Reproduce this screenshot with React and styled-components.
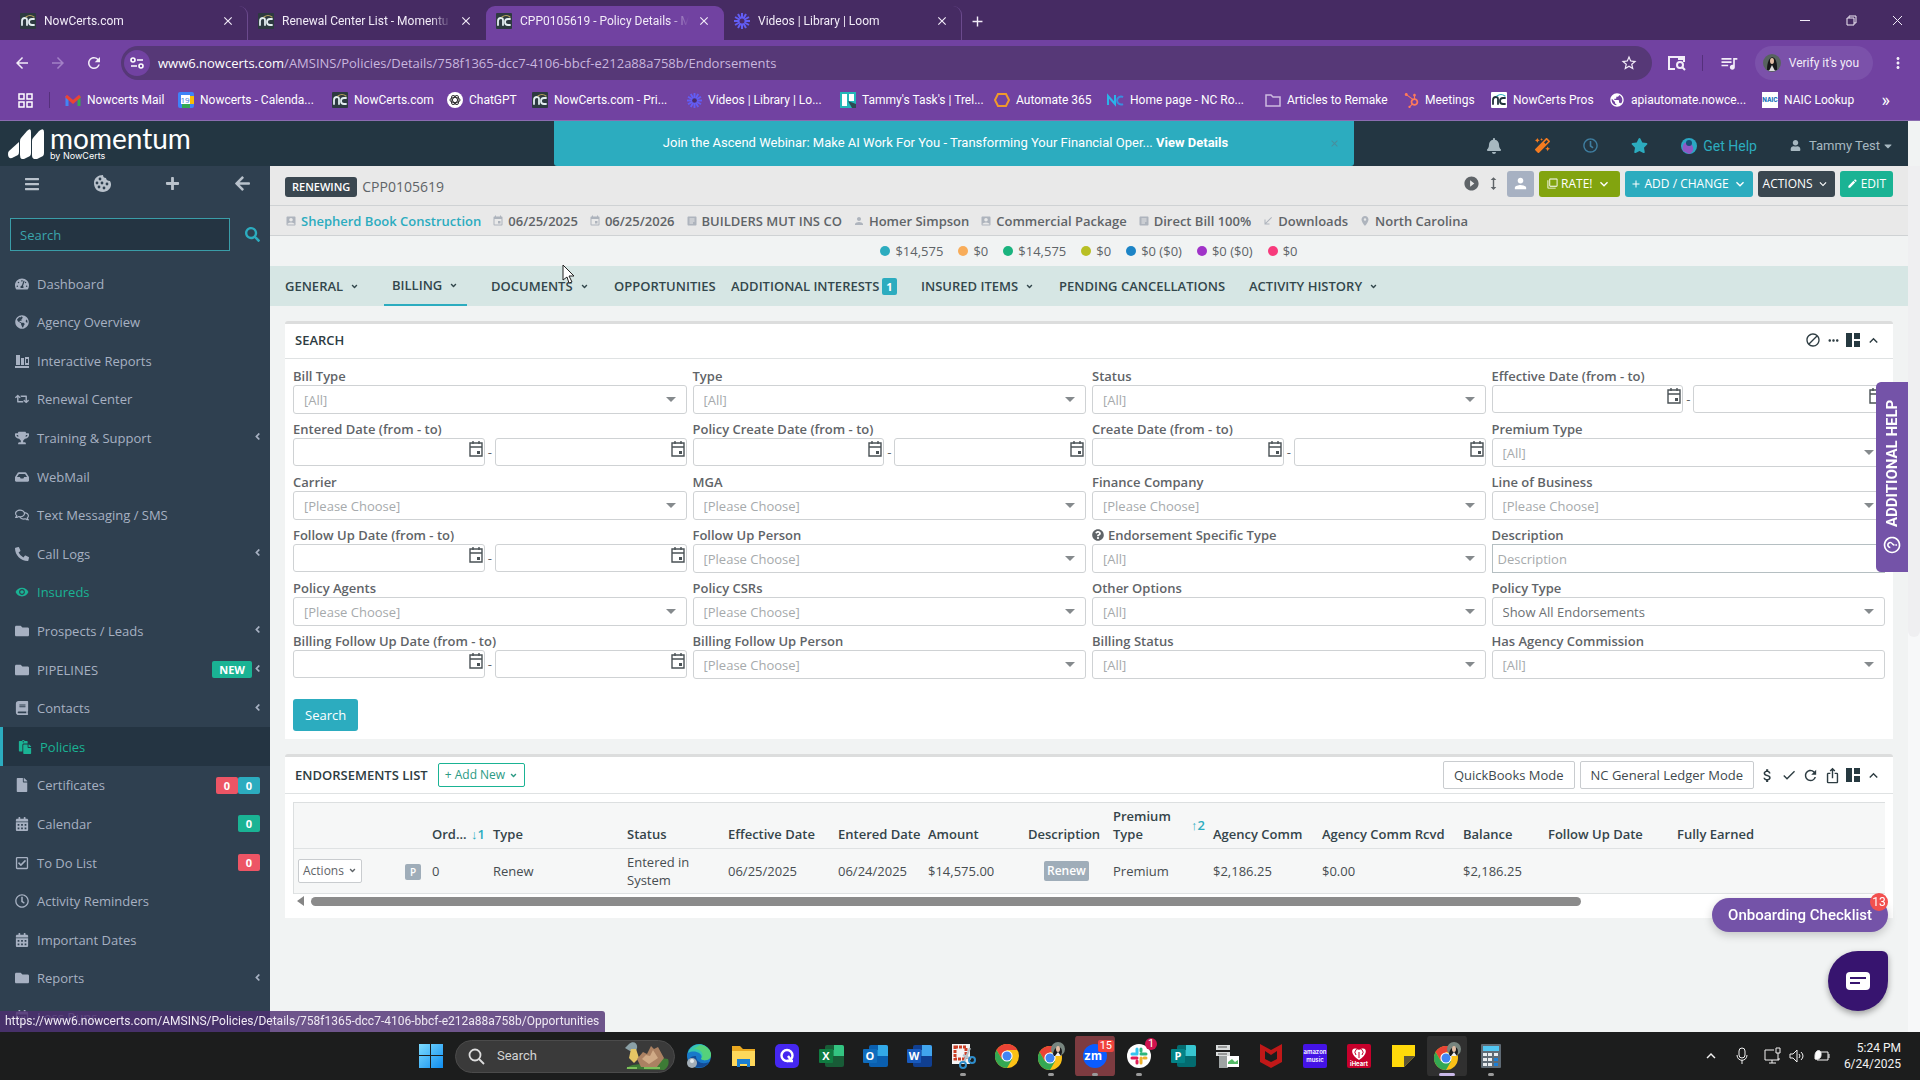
// Components==============
import React, { useId } from "react";
import styled, { createGlobalStyle, ThemeProvider } from "styled-components";
import {
  FaAngleDown,
  FaAngleLeft,
  FaArrowLeft,
  FaBars,
  FaBell,
  FaBook,
  FaCalendarAlt,
  FaCaretDown,
  FaFile,
  FaFolder,
  FaGlobeAmericas,
  FaHubspot,
  FaInbox,
  FaMagic,
  FaPaste,
  FaPhoneAlt,
  FaPlus,
  FaQuestionCircle,
  FaRegCheckSquare,
  FaRegClock,
  FaRegComments,
  FaRegCalendarAlt,
  FaRetweet,
  FaSearch,
  FaStar,
  FaTachometerAlt,
  FaTrophy,
  FaUser,
} from "react-icons/fa";
import {
  MdAccountBox,
  MdAdd,
  MdArrowBack,
  MdArrowForward,
  MdArticle,
  MdAttachMoney,
  MdBlock,
  MdCallReceived,
  MdCheck,
  MdClose,
  MdEdit,
  MdEvent,
  MdExpandLess,
  MdExpandMore,
  MdFilterNone,
  MdHeight,
  MdHelpOutline,
  MdIosShare,
  MdMoreHoriz,
  MdMoreVert,
  MdPerson,
  MdPlace,
  MdPlayCircleFilled,
  MdPublic,
  MdQueueMusic,
  MdRefresh,
  MdStarBorder,
  MdVisibility,
} from "react-icons/md";
// =========================

const theme = {
  purple: { strip: "#462b63", bar: "#7142a1", field: "#563877", help: "#7453a8" },
  navy: { header: "#233642", side: "#2f4050", active: "#243442" },
  teal: "#2cacbf",
  green: "#1ab394",
  red: "#ed5565",
  slate: "#3a4750",
  line: "#cfd2d4",
  text: "#5f6468",
  app: `"Open Sans", "Noto Sans", sans-serif`,
  chrome: `Roboto, "Open Sans", sans-serif`,
};

const GlobalStyle = createGlobalStyle`
  * { box-sizing: border-box; }
  body { margin: 0; overflow: hidden; }
  button, input, select { font: inherit; color: inherit; margin: 0; }
  button { padding: 0; border: 0; background: none; cursor: pointer; }
  a { color: inherit; text-decoration: none; }
  svg { display: block; flex: none; }
`;

const Screen = styled.div`
  display: flex;
  flex-direction: column;
  height: 100vh;
  font: 13px/18px ${({ theme }) => theme.app};
  color: ${({ theme }) => theme.text};
  background: #f1f3f3;
`;

// Browser==================
const TabStrip = styled.div`
  flex: none;
  display: flex;
  align-items: flex-end;
  height: 40px;
  padding-left: 10px;
  background: ${({ theme }) => theme.purple.strip};
  color: #f2ecf8;
  font: 12px/16px ${({ theme }) => theme.chrome};
`;

const Tab = styled.div`
  display: flex;
  align-items: center;
  gap: 8px;
  width: 238px;
  height: 34px;
  padding: 0 12px 4px 10px;
  border-radius: 9px 9px 0 0;
  background: ${({ $active, theme }) => $active && theme.purple.bar};
  border-right: 1px solid
    ${({ $line }) => ($line ? "#6b4a8d" : "transparent")};
`;

const TabTitle = styled.span`
  flex: 1;
  overflow: hidden;
  white-space: nowrap;
  mask-image: linear-gradient(to right, #000 88%, transparent);
`;

const NewTab = styled.button`
  height: 34px;
  padding: 0 7px 4px;
`;

const WindowButtons = styled.div`
  display: flex;
  align-items: center;
  height: 40px;
  margin-left: auto;

  button {
    display: grid;
    place-items: center;
    width: 46px;
    height: 40px;
  }
`;

const Toolbar = styled.div`
  flex: none;
  display: flex;
  align-items: center;
  height: 46px;
  padding: 0 13px;
  gap: 16px;
  background: ${({ theme }) => theme.purple.bar};
  color: #f2ecf8;
`;

const NavButtons = styled.div`
  display: flex;
  gap: 18px;
  padding-right: 2px;
`;

const Address = styled.label`
  flex: 1;
  display: flex;
  align-items: center;
  gap: 8px;
  height: 34px;
  padding: 0 14px 0 3px;
  border-radius: 17px;
  background: ${({ theme }) => theme.purple.field};
`;

const SiteInfo = styled.span`
  display: grid;
  place-items: center;
  width: 26px;
  height: 26px;
  border-radius: 50%;
  background: ${({ theme }) => theme.purple.bar};
`;

const Url = styled.span`
  flex: 1;
  color: #c9b6df;

  b {
    font-weight: 400;
    color: #fff;
  }
`;

const Profile = styled.button`
  display: flex;
  align-items: center;
  gap: 8px;
  height: 34px;
  padding: 0 14px 0 8px;
  border-radius: 17px;
  background: #7b51aa;
  font: 12px/16px ${({ theme }) => theme.chrome};
`;

const Divider = styled.span`
  width: 1px;
  height: 16px;
  background: #55307c;
`;

const Bookmarks = styled.nav`
  flex: none;
  display: flex;
  align-items: center;
  height: 35px;
  padding: 0 30px 6px 18px;
  background: ${({ theme }) => theme.purple.bar};
  border-bottom: 1px solid #8b6cb0;
  color: #fff;
  font: 12px/16px ${({ theme }) => theme.chrome};
  white-space: nowrap;
`;

const Bookmark = styled.a`
  flex: 0 1 ${({ $w }) => $w}px;
  display: flex;
  align-items: center;
  gap: 6px;
`;

const MoreBookmarks = styled.button`
  margin-left: auto;
  font-size: 18px;
`;

const AppsButton = styled.button`
  display: flex;
  width: 31px;
`;

const NaicTile = styled.span`
  flex: none;
  width: 16px;
  height: 16px;
  background: #fff;
  color: #1b75bb;
  font: 800 6px/16px Inter, sans-serif;
  text-align: center;
`;

// App shell================
const AppHeader = styled.header`
  flex: none;
  display: grid;
  grid-template-columns: 554px minmax(0, 800px) 1fr;
  height: 45px;
  margin-right: 12px;
  background: ${({ theme }) => theme.navy.header};
`;

const Logo = styled.a`
  display: flex;
  align-items: center;
  gap: 6px;
  padding-left: 8px;
  color: #fff;
`;

const LogoText = styled.span`
  display: flex;
  flex-direction: column;
  font: 28px/24px "Lato", sans-serif;

  small {
    font: 9px/12px "Inter", sans-serif;
  }
`;

const Banner = styled.div`
  display: flex;
  align-items: center;
  padding-right: 14px;
  border-radius: 0 0 3px 3px;
  background: ${({ theme }) => theme.teal};
  color: #fff;
  font-family: ${({ theme }) => theme.chrome};

  p {
    flex: 1;
    margin: 0 0 2px;
    padding-left: 8px;
    text-align: center;
  }

  button {
    color: #4a8d9c;
  }
`;

const HeaderTools = styled.div`
  display: flex;
  align-items: center;
  justify-content: flex-end;
  gap: 33px;
  padding: 4px 14px 0 0;
  color: #a7b8c0;
  font-family: ${({ theme }) => theme.chrome};
`;

const HeaderLink = styled.a`
  display: flex;
  align-items: center;
  gap: ${({ $gap }) => $gap || 6}px;
  color: ${({ $color }) => $color};
  font-size: ${({ $color }) => $color && "14px"};
`;

const Body = styled.div`
  flex: 1;
  min-height: 0;
  display: flex;
  overflow: hidden;
`;

// Sidebar==================
const Side = styled.aside`
  flex: none;
  width: 270px;
  background: ${({ theme }) => theme.navy.side};
  color: #a7b1c2;
  font-weight: 500;
`;

const SideTools = styled.div`
  display: flex;
  justify-content: space-between;
  align-items: center;
  height: 52px;
  padding: 0 19px 17px 24px;
  color: #b9c2cc;
`;

const SideSearch = styled.form`
  display: flex;
  align-items: center;
  gap: 15px;
  height: 33px;
  padding-left: 10px;
  margin-bottom: 13px;
  color: ${({ theme }) => theme.teal};
  font-weight: 400;

  input {
    width: 220px;
    height: 33px;
    padding: 0 9px;
    border: 1px solid #3a9da8;
    outline: 0;
    background: ${({ theme }) => theme.navy.active};
  }

  input::placeholder {
    color: #3ba5ad;
    opacity: 1;
  }
`;

const SideList = styled.ul`
  margin: 0;
  padding: 0;
  list-style: none;
`;

const SideItem = styled.li`
  height: 39px;
  border-left: ${({ $active, theme }) => $active && `3px solid ${theme.teal}`};
  background: ${({ $active, theme }) => $active && theme.navy.active};
  color: ${({ $lit, theme }) => $lit && theme.green};

  &:nth-child(5n + 2),
  &:nth-child(5n + 4) {
    height: 38px;
  }

  a {
    display: flex;
    align-items: center;
    height: 100%;
    padding: 0 10px 0 15px;
  }

  a > svg {
    margin-right: 8px;
  }

  a > span:first-of-type {
    flex: 1;
  }

  a > svg:last-child {
    margin: 0 -3px 2px 0;
  }
`;

const Tag = styled.span`
  min-width: 22px;
  padding: 0 ${({ $wide }) => ($wide ? 7 : 6)}px;
  border-radius: 2px;
  background: ${({ $tone, theme }) => theme[$tone]};
  color: #fff;
  font: 700 11px/17px ${({ theme }) => theme.app};
  text-align: center;
`;

// Policy header============
const Main = styled.main`
  flex: 1;
  min-width: 0;
`;

const PolicyBar = styled.div`
  display: flex;
  align-items: center;
  gap: 5px;
  height: 40px;
  padding: 0 15px 0 15px;
  background: #e9e9e9;
  border-bottom: 1px solid ${({ theme }) => theme.line};
`;

const StatusTag = styled.span`
  margin-top: 3px;
  padding: 0 7px;
  border-radius: 3px;
  background: ${({ theme }) => theme.slate};
  color: #fff;
  font: 600 11px/20px ${({ theme }) => theme.app};
`;

const PolicyNumber = styled.h1`
  flex: 1;
  margin: 2px 0 0;
  font: 14px/20px ${({ theme }) => theme.app};
`;

const BarButton = styled.button`
  display: flex;
  align-items: center;
  justify-content: center;
  gap: 3px;
  height: 26px;
  min-width: ${({ $bg }) => ($bg ? 27 : 16)}px;
  margin-bottom: 4px;
  padding: 0 ${({ $pad }) => $pad}px;
  border-radius: 3px;
  background: ${({ $bg }) => $bg};
  color: ${({ $bg }) => $bg && "#fff"};
  font-size: 12px;
  font-weight: 500;
`;

const InfoBar = styled.div`
  display: flex;
  align-items: center;
  gap: 11px;
  height: 30px;
  padding-left: 15px;
  background: #e9e9e9;
  border-bottom: 1px solid ${({ theme }) => theme.line};
  font-weight: 600;
  white-space: nowrap;
`;

const Info = styled.span`
  display: flex;
  align-items: center;
  gap: 4px;
  color: ${({ $link, theme }) => $link && theme.teal};

  svg {
    color: #aeb4bd;
  }
`;

const Totals = styled.div`
  display: flex;
  align-items: center;
  justify-content: center;
  gap: 15px;
  height: 30px;
`;

const Total = styled.span`
  display: flex;
  align-items: center;
  gap: 5px;

  &::before {
    content: "";
    width: 10px;
    height: 10px;
    border-radius: 50%;
    background: ${({ $color }) => $color};
  }
`;

const Sections = styled.nav`
  display: flex;
  height: 40px;
  padding-left: 5px;
  background: #d6e6e4;
  color: #33474c;
  font-weight: 600;
  white-space: nowrap;
`;

const Section = styled.a`
  flex: 0 1 ${({ $w }) => $w}px;
  display: flex;
  align-items: center;
  gap: 7px;
  padding-left: 10px;

  ${Tag} {
    min-width: 14px;
    margin-left: -4px;
    padding: 0 4px;
  }
`;

const ActiveSection = styled(Section)`
  flex-basis: 83px;
  margin-right: 14px;
  padding-left: 8px;
  border-bottom: 2px solid ${({ theme }) => theme.teal};
`;

// Panels===================
const Panel = styled.section`
  margin: 15px 15px 0;
  border-top: 3px solid #dcdddd;
  border-radius: 3px 3px 0 0;
  background: #fff;
`;

const PanelHead = styled.div`
  display: flex;
  align-items: center;
  gap: 5px;
  height: ${({ $tall }) => ($tall ? 37 : 35)}px;
  padding: 0 11px ${({ $tall }) => ($tall ? 0 : 2)}px 10px;
  border-bottom: 1px solid #dfe2e3;
  color: #2d3c42;

  h2 {
    margin: 0 5px 0 0;
    font: 600 13px/18px ${({ theme }) => theme.app};
  }
`;

const Spacer = styled.span`
  flex: 1;
`;

const SearchForm = styled.form`
  padding: 2px 8px 8px;
`;

const Fields = styled.div`
  display: grid;
  grid-template-columns: repeat(4, minmax(0, 1fr));
  column-gap: 6px;
  margin-bottom: 20px;
`;

const FieldBox = styled.div`
  display: flex;
  flex-direction: column;
  height: 53px;
`;

const FieldLabel = styled.label`
  display: flex;
  align-items: center;
  gap: 4px;
  height: 24px;
  padding-top: 5px;
  font-weight: 600;
  line-height: 18px;
`;

const SelectWrap = styled.div`
  display: flex;
  align-items: center;
  height: 29px;
  padding-right: 10px;
  border: 1px solid ${({ theme }) => theme.line};
  border-radius: 3px;
  background: #fff;
  color: #858a8d;

  select {
    flex: 1;
    min-width: 0;
    height: 27px;
    padding: 0 10px;
    border: 0;
    appearance: none;
    background: none;
    color: ${({ $filled }) => ($filled ? "#6c7174" : "#a6aaac")};
  }
`;

const Caret = styled.span`
  border: 5px solid transparent;
  border-top-color: #858a8d;
  border-bottom: 0;
`;

const TextField = styled.input`
  height: 29px;
  padding: 0 5px;
  border: 1px solid #b5bfc2;

  &::placeholder {
    color: #a6aaac;
    opacity: 1;
  }
`;

const DateRange = styled.div`
  display: flex;
  align-items: center;
  gap: 3px;
`;

const DateBox = styled.span`
  flex: 1;
  min-width: 0;
  display: flex;
  height: 28px;
  border: 1px solid ${({ theme }) => theme.line};
  border-radius: 3px;

  input {
    flex: 1;
    min-width: 0;
    border: 0;
    background: none;
  }

  button {
    height: 20px;
    color: #4a5256;
  }
`;

const SubmitButton = styled.button`
  display: block;
  height: 32px;
  padding: 0 12px;
  border-radius: 3px;
  background: ${({ theme }) => theme.teal};
  color: #fff;
`;

const OutlineButton = styled.button`
  display: flex;
  align-items: center;
  gap: 4px;
  height: ${({ $small }) => ($small ? 24 : 28)}px;
  padding: 0 ${({ $small }) => ($small ? 6 : 10)}px;
  border: 1px solid ${({ $green, theme }) => ($green ? theme.green : "#c9cccf")};
  border-radius: 2px;
  background: #fff;
  color: ${({ $green }) => ($green ? "#2b9a84" : "#40494e")};
  font-size: ${({ $small }) => ($small ? 12 : 13)}px;
`;

const RowButton = styled(OutlineButton)`
  padding: 0 4px;
  color: ${({ theme }) => theme.text};
`;

const Tools = styled.div`
  display: flex;
  align-items: center;
  gap: 5px;
`;

const TableArea = styled.div`
  padding: 8px 8px 9px;
`;

const TableClip = styled.div`
  overflow: hidden;
  border: 1px solid #dcdfe0;
  border-right: 0;
  border-bottom: 0;
`;

const Table = styled.table`
  width: 100%;
  table-layout: fixed;
  border-collapse: collapse;
  color: #474d51;

  th,
  td {
    padding: 0 4px;
    text-align: left;
    background: #f6f7f7;
    border-bottom: 1px solid #dfe2e3;
  }

  th {
    height: 45px;
    padding-bottom: 5px;
    vertical-align: bottom;
    color: #34444a;
    font-weight: 600;
    white-space: nowrap;
  }

  td {
    height: 45px;
  }
`;

const SortHead = styled.div`
  display: flex;
  align-items: center;
  justify-content: space-between;
  white-space: ${({ $wrap }) => $wrap && "normal"};

  em {
    color: ${({ theme }) => theme.teal};
    font-style: normal;
    white-space: nowrap;
  }
`;

const Chip = styled.span`
  display: inline-block;
  margin-left: ${({ $indent }) => ($indent ? 16 : 0)}px;
  padding: 0 ${({ $indent }) => ($indent ? 3 : 5)}px;
  border-radius: 2px;
  background: #9fadb9;
  color: #fff;
  font: 600 ${({ $indent }) => ($indent ? "12px/20px" : "10px/16px")}
    ${({ theme }) => theme.app};
`;

const ScrollTrack = styled.div`
  display: flex;
  align-items: center;
  gap: 7px;
  height: 15px;
  padding-left: 4px;

  i {
    border: 5px solid transparent;
    border-right: 7px solid #858585;
    border-left: 0;
  }

  span {
    width: 80%;
    height: 9px;
    border-radius: 5px;
    background: #8b8b8b;
  }
`;

const PageScroll = styled.div`
  flex: none;
  width: 12px;
  background: #f7f8f9;

  &::before {
    content: "";
    display: block;
    height: 471px;
    border-radius: 0 0 6px 6px;
    background: #efeff1;
  }
`;

// Floating=================
const HelpTab = styled.button`
  position: fixed;
  right: 12px;
  top: 382px;
  display: flex;
  align-items: center;
  justify-content: center;
  gap: 8px;
  width: 32px;
  height: 190px;
  border-radius: 0 5px 5px 0;
  background: ${({ theme }) => theme.purple.help};
  color: #fff;
  font: 700 15px/20px Roboto, sans-serif;
  writing-mode: vertical-rl;
  transform: rotate(180deg);

  svg {
    transform: rotate(90deg);
  }
`;

const Onboarding = styled.button`
  position: fixed;
  right: 32px;
  bottom: 148px;
  height: 34px;
  padding: 0 16px;
  border-radius: 17px;
  background: ${({ theme }) => theme.purple.help};
  box-shadow: 0 3px 10px rgba(0, 0, 0, 0.2);
  color: #fff;
  font: 500 15px/34px Roboto, sans-serif;

  span {
    position: absolute;
    top: -5px;
    right: 0;
    width: 18px;
    height: 18px;
    border-radius: 50%;
    background: #f2504f;
    font: 12px/18px Roboto, sans-serif;
  }
`;

const Chat = styled.button`
  position: fixed;
  right: 32px;
  bottom: 69px;
  display: grid;
  place-items: center;
  width: 60px;
  height: 60px;
  border-radius: 50% 6px 50% 50%;
  background: #37146f;
  box-shadow: 0 3px 6px rgba(0, 0, 0, 0.35);
`;

const LinkHint = styled.div`
  position: fixed;
  left: 0;
  bottom: 48px;
  height: 21px;
  padding: 0 6px 0 5px;
  border-radius: 0 3px 0 0;
  background: rgba(77, 45, 112, 0.8);
  color: #efeaf4;
  font: 12px/20px ${({ theme }) => theme.chrome};
`;

const Pointer = styled.svg`
  position: fixed;
  left: 562px;
  top: 264px;
`;

// Taskbar==================
const Taskbar = styled.footer`
  flex: none;
  display: grid;
  grid-template-columns: 409px auto 1fr;
  align-items: center;
  height: 48px;
  background: #1c1d1d;
  color: #f2f2f2;
  font: 12px/16px ${({ theme }) => theme.chrome};
`;

const Apps = styled.div`
  grid-column: 2;
  display: flex;
  align-items: center;
`;

const AppSlot = styled.button`
  position: relative;
  display: grid;
  place-items: center;
  width: 44px;
  height: 40px;
  border-radius: 4px;
  background: ${({ $bg }) => $bg};
  background-clip: padding-box;
  border: solid transparent;
  border-width: 0 2px;

  &::after {
    content: "";
    position: absolute;
    bottom: 0;
    width: ${({ $run }) => ($run === "wide" ? 16 : $run ? 6 : 0)}px;
    height: 3px;
    border-radius: 2px;
    background: ${({ $run }) => ($run === "wide" ? "#c9b8e8" : "#9a9a9a")};
  }
`;

const Count = styled.span`
  position: absolute;
  top: ${({ $big }) => ($big ? 4 : 2)}px;
  right: ${({ $big }) => ($big ? 1 : 2)}px;
  min-width: 12px;
  padding: 0 ${({ $big }) => ($big ? 2 : 0)}px;
  border-radius: ${({ $big }) => ($big ? 2 : 6)}px;
  background: ${({ $big }) => ($big ? "#f0433c" : "#d1124f")};
  color: #fff;
  font: 11px/12px ${({ theme }) => theme.chrome};
`;

const TaskSearch = styled.label`
  display: flex;
  align-items: center;
  gap: 12px;
  width: 220px;
  height: 33px;
  margin: 0 2px;
  padding: 0 4px 0 12px;
  border: 1px solid #4b4b4b;
  border-radius: 17px;
  background: #3a3a3a;
  font-size: 13px;

  input {
    flex: 1;
    min-width: 0;
    padding: 0;
    border: 0;
    outline: 0;
    background: none;
  }

  input::placeholder {
    color: #d4d4d4;
    opacity: 1;
  }
`;

const Tray = styled.div`
  grid-column: 3;
  display: flex;
  align-items: center;
  justify-content: flex-end;
  gap: 7px;
  padding-right: 19px;
  text-align: right;

  > svg:first-child {
    margin-right: 6px;
  }

  > svg:nth-child(2) {
    margin-right: 5px;
  }

  time {
    margin-left: 6px;
  }
`;
// =========================

const NcIcon = ({ light }) => (
  <svg width="16" height="16" viewBox="0 0 16 16" fill="none" strokeWidth="1.8" strokeLinecap="round">
    <rect width="16" height="16" rx="1" fill={light ? "#fff" : "#2d3a40"} />
    <path d="M2 12V8q0-3 3-3 2 0 2 2v5M14 6h-2q-3 0-3 3t3 3h2" stroke={light ? "#22333c" : "#e3eef0"} />
    <path d="M6 4q4-3 8 0" stroke={light ? "#2cacbf" : "#b5a15c"} strokeWidth="1.2" />
  </svg>
);

const CookieIcon = () => (
  <svg width="17" height="17" viewBox="0 0 17 17">
    <path d="M9 0c0 2 1 3 3 3 0 2 2 3 4 3 3 5-1 11-7 11S0 13 0 8 4 0 9 0z" fill="currentColor" />
    <g fill="#2f4050">
      <circle cx="6" cy="4" r="1.4" />
      <circle cx="3" cy="8" r="1.4" />
      <circle cx="8" cy="8" r="1.4" />
      <circle cx="5" cy="12" r="1.4" />
      <circle cx="10" cy="13" r="1.4" />
      <circle cx="13" cy="9" r="1.4" />
    </g>
  </svg>
);

const DateIcon = () => (
  <svg width="16" height="18" viewBox="0 0 16 18" fill="none" stroke="currentColor" strokeWidth="1.4">
    <path d="M2 3h12v13H2zM2 7h12M5 1v3M11 1v3" />
    <path d="M9 11h3v3H9z" fill="currentColor" stroke="none" />
  </svg>
);

const LoomIcon = ({ size = 16 }) => (
  <svg width={size} height={size} viewBox="0 0 16 16" stroke="#625df5" strokeWidth="2">
    {[0, 30, 60, 90, 120, 150].map((a) => (
      <path key={a} d="M8 0V16" transform={`rotate(${a} 8 8)`} />
    ))}
    <circle cx="8" cy="8" r="2.5" fill="#4b2b69" stroke="none" />
  </svg>
);

const BoardIcon = () => (
  <svg width="14" height="14" viewBox="0 0 14 14" fill="#263940">
    <path d="M0 0h6v14H0zM8 0h6v6H8zM8 8h6v6H8z" />
  </svg>
);

const ReportIcon = () => (
  <svg width="14" height="14" viewBox="0 0 14 14" fill="currentColor">
    <path d="M0 12h14v2H0zM1 1h4v10H1zM6 4h3v7H6zM10 3h4v8h-4zm1 2v4h2V5z" fillRule="evenodd" />
  </svg>
);

const ChromeIcon = () => (
  <svg width="24" height="24" viewBox="0 0 24 24">
    <circle cx="12" cy="12" r="12" fill="#fbc116" />
    <path d="M1.6 6A12 12 0 0 1 22.4 6H12L6.8 15z" fill="#ea4335" />
    <path d="M1.6 6A12 12 0 0 0 12 24l5.2-9L6.8 15z" fill="#34a853" />
    <circle cx="12" cy="12" r="5.6" fill="#fff" />
    <circle cx="12" cy="12" r="4.5" fill="#4285f4" />
  </svg>
);

const ChromeProfileIcon = () => (
  <svg width="28" height="28" viewBox="0 0 28 28">
    <g transform="translate(1 4)">
      <ChromeIcon />
    </g>
    <circle cx="21" cy="7" r="7" fill="#77857f" />
    <path d="M16 12c1-8 9-10 9-2l-1 4h-7z" fill="#1c1c1e" />
    <ellipse cx="21" cy="7" rx="2" ry="3" fill="#e3bfa6" />
    <path d="M18 14l3-4 3 4z" fill="#eee" />
  </svg>
);

const OfficeIcon = ({ letter, dark, light, tile }) => (
  <svg width="25" height="24" viewBox="0 0 25 24">
    <rect x="6" y="1" width="19" height="22" rx="2" fill={dark} />
    <path d="M15 1h8a2 2 0 0 1 2 2v9H15z" fill={light} />
    <path d="M6 6h9v6H6z" fill={light} opacity=".5" />
    <rect y="5" width="14" height="14" rx="1" fill={tile} />
    <text x="7" y="16" fill="#fff" fontSize="11" fontWeight="700" textAnchor="middle" fontFamily="Open Sans, sans-serif">
      {letter}
    </text>
  </svg>
);

const WindowsIcon = () => (
  <svg width="24" height="24" viewBox="0 0 24 24">
    <defs>
      <linearGradient id="win" x2="1" y2="1">
        <stop stopColor="#7ddcff" />
        <stop offset="1" stopColor="#0f8df0" />
      </linearGradient>
    </defs>
    <path d="M0 0h11v11H0zM12 0h12v11H12zM0 12h11v12H0zM12 12h12v12H12z" fill="url(#win)" />
  </svg>
);

const DuckIcon = () => (
  <svg width="46" height="30" viewBox="0 0 46 30">
    <path d="M2 28c6-6 12-4 17-5s12-8 25-5c2 5-1 9-4 11z" fill="#3d7b35" />
    <path d="M5 3c4-4 9-1 8 4l-1 3H6L1 7z" fill="#8aa0a6" />
    <path d="M7 8h5l3 9-5 5-5-5z" fill="#e4c564" />
    <path d="M13 18l6-7 4 2 4-8 3 3 4-2 6 11-7 9H17z" fill="#ab8162" />
    <path d="M18 18l4-4 4 1 3-6 5 8-9 6z" fill="#d0aa86" />
    <path d="M3 27h10M20 27h16" stroke="#7cc05a" strokeWidth="2" />
  </svg>
);

const EdgeIcon = () => (
  <svg width="24" height="24" viewBox="0 0 24 24">
    <circle cx="12" cy="12" r="12" fill="#1879c9" />
    <path d="M1 9C4-2 19-3 23 8c2 7-5 10-9 7 3-5-6-10-13-6z" fill="#37c6b0" />
    <path d="M13 1c6 0 12 5 11 11-1 5-7 5-10 3 4-5 0-10-7-10z" fill="#55d17b" />
    <path d="M9 12c0 6 6 9 13 6-4 7-13 7-18 2s0-8 5-8z" fill="#134b96" />
    <circle cx="5" cy="19" r="5" fill="#a4afb8" />
    <circle cx="5" cy="17" r="2" fill="#e5eaed" />
  </svg>
);

const ExplorerIcon = () => (
  <svg width="25" height="22" viewBox="0 0 25 22">
    <path d="M1 1h8l3 3h12v16H1z" fill="#e9a820" />
    <path d="M1 6h23v15H1z" fill="#fed85b" />
    <path d="M6 14h13v8h-3v-3H9v3H6z" fill="#1c7fd1" />
  </svg>
);

const SnipIcon = () => (
  <svg width="25" height="26" viewBox="0 0 25 26">
    <rect x="1" y="1" width="18" height="20" fill="#f4f4f4" />
    <rect x="4" y="4" width="11" height="12" fill="none" stroke="#ca3e26" strokeWidth="3" strokeDasharray="3 1" />
    <path d="M19 5l-6 14M12 12l8 4" stroke="#b6c2c8" strokeWidth="2" />
    <g fill="none" stroke="#2e8dcb" strokeWidth="2">
      <circle cx="12" cy="22" r="3" />
      <circle cx="21" cy="17" r="3" />
    </g>
  </svg>
);

const SlackIcon = () => (
  <svg width="24" height="24" viewBox="0 0 24 24" strokeWidth="3" strokeLinecap="round">
    <circle cx="12" cy="12" r="12" fill="#fff" />
    <path d="M10 5v5M5 10h3" stroke="#36c5f0" />
    <path d="M19 10h-5M14 5v2" stroke="#2eb67d" />
    <path d="M14 19v-5M19 14h-2" stroke="#ecb22e" />
    <path d="M5 14h5M10 19v-2" stroke="#e01e5a" />
  </svg>
);

const TileText = ({ bg, lines, size }) => (
  <svg width="24" height="24" viewBox="0 0 24 24">
    <rect width="24" height="24" rx="2" fill={bg} />
    <g fill="#fff" fontSize={size} fontFamily="Inter, sans-serif" textAnchor="middle" fontWeight="600">
      {lines.map(([t, y]) => (
        <text key={t} x="12" y={y}>
          {t}
        </text>
      ))}
    </g>
  </svg>
);

const HeartIcon = () => (
  <svg width="24" height="24" viewBox="0 0 24 24">
    <rect width="24" height="24" rx="2" fill="#c6002b" />
    <path d="M12 16C1 9 5 1 12 6c7-5 11 3 0 10z" fill="#fff" />
    <path d="M9 11a4 4 0 1 1 6 0M12 8v6" stroke="#c6002b" fill="none" />
    <text x="12" y="22" fill="#fff" fontSize="6" fontWeight="700" textAnchor="middle" fontFamily="Inter, sans-serif">
      iHeart
    </text>
  </svg>
);

const PrinterIcon = () => (
  <svg width="25" height="24" viewBox="0 0 25 24">
    <path d="M1 1h14v5H1zM1 8h14v4H1z" fill="#d9dcdc" />
    <path d="M4 12h9v12H4z" fill="#9ea3a3" />
    <path d="M3 3h9M3 10h9" stroke="#555" />
    <rect x="12" y="12" width="12" height="11" fill="#fff" />
    <path d="M13 18l4-3 3 3 3-2v4H13z" fill="#54ba66" />
  </svg>
);

const CalculatorIcon = () => (
  <svg width="20" height="24" viewBox="0 0 20 24">
    <rect width="20" height="24" rx="1" fill="#5f6b75" />
    <rect x="2" y="2" width="16" height="5" fill="#52c6f2" />
    {[9, 14, 19].map((y) =>
      [2, 7, 13].map((x) => (
        <rect key={`${x}${y}`} x={x} y={y} width="4" height="3" fill={x === 13 && y > 9 ? "#1b7fd6" : "#e8ecef"} />
      ))
    )}
  </svg>
);

const BOOKMARKS = [
  ["Nowcerts Mail", 113, <svg width="16" height="14" viewBox="0 0 16 14" fill="none" strokeWidth="3"><path d="M2 13V3" stroke="#4285f4" /><path d="M14 13V3" stroke="#34a853" /><path d="M1 3l7 6 7-6" stroke="#ea4335" /></svg>],
  ["Nowcerts - Calenda...", 154, <svg width="16" height="16" viewBox="0 0 16 16"><rect width="16" height="16" rx="2" fill="#3f83f8" /><path d="M16 4v8h-4V4z" fill="#fbbc05" /><path d="M4 12h8v4H4z" fill="#34a853" /><path d="M3 3h9v9H3z" fill="#fff" /><text x="7" y="11" fontSize="8" fill="#3b74d9" textAnchor="middle" fontFamily="Open Sans, sans-serif">19</text></svg>],
  ["NowCerts.com", 115, <NcIcon />],
  ["ChatGPT", 85, <svg width="16" height="16" viewBox="0 0 16 16" fill="none" stroke="#333"><circle cx="8" cy="8" r="8" fill="#fff" stroke="none" />{[0, 60, 120].map((a) => (<ellipse key={a} cx="8" cy="8" rx="5" ry="2.5" transform={`rotate(${a} 8 8)`} />))}</svg>],
  ["NowCerts.com - Pri...", 155, <NcIcon />],
  ["Videos | Library | Lo...", 153, <LoomIcon size={15} />],
  ["Tammy's Task's | Trel...", 154, <svg width="16" height="16" viewBox="0 0 16 16"><rect width="16" height="16" fill="#23b6b8" /><path d="M2 2h5v12H2zM9 2h5v7H9z" fill="#fff" /><path d="M8 9l4 7h4v-4z" fill="#2c4a53" /></svg>],
  ["Automate 365", 113, <svg width="16" height="16" viewBox="0 0 16 16" fill="none" stroke="#f09a2b" strokeWidth="2"><path d="M4 2h8l3 6-3 6H4L1 8z" /></svg>],
  ["Home page - NC Ro...", 158, <svg width="17" height="14" viewBox="0 0 17 14" fill="none" strokeWidth="2"><path d="M1 12V3l7 8V2" stroke="#2ab4e8" /><path d="M16 4a4 4 0 1 0 0 7" stroke="#3a8dde" /></svg>],
  ["Articles to Remake", 139, <svg width="16" height="14" viewBox="0 0 16 14" fill="none" stroke="#cdbbe0" strokeWidth="1.5"><path d="M1 2h5l2 2h7v9H1z" /></svg>],
  ["Meetings", 87, <FaHubspot size={15} color="#ff7a59" />],
  ["NowCerts Pros", 118, <NcIcon light />],
  ["apiautomate.nowce...", 153, <MdPublic size={16} />],
  ["NAIC Lookup", 110, <NaicTile>NAIC</NaicTile>],
];

const TABS = [
  { text: "NowCerts.com", line: true },
  { text: "Renewal Center List - Momentu" },
  { text: "CPP0105619 - Policy Details - M", active: true },
  { text: "Videos | Library | Loom", line: true, loom: true },
];

const MENU = [
  { icon: FaTachometerAlt, text: "Dashboard" },
  { icon: FaGlobeAmericas, text: "Agency Overview" },
  { icon: ReportIcon, text: "Interactive Reports" },
  { icon: FaRetweet, text: "Renewal Center" },
  { icon: FaTrophy, text: "Training & Support", more: true },
  { icon: FaInbox, text: "WebMail" },
  { icon: FaRegComments, text: "Text Messaging / SMS" },
  { icon: FaPhoneAlt, text: "Call Logs", more: true },
  { icon: MdVisibility, text: "Insureds", lit: true },
  { icon: FaFolder, text: "Prospects / Leads", more: true },
  { icon: FaFolder, text: "PIPELINES", more: true, tags: [["NEW", "green"]] },
  { icon: FaBook, text: "Contacts", more: true },
  { icon: FaPaste, text: "Policies", lit: true, active: true },
  { icon: FaFile, text: "Certificates", tags: [["0", "red"], ["0", "teal"]] },
  { icon: FaCalendarAlt, text: "Calendar", tags: [["0", "green"]] },
  { icon: FaRegCheckSquare, text: "To Do List", tags: [["0", "red"]] },
  { icon: FaRegClock, text: "Activity Reminders" },
  { icon: FaCalendarAlt, text: "Important Dates" },
  { icon: FaFolder, text: "Reports", more: true },
  { icon: FaRegCalendarAlt, text: "Loss Runs" },
];

const INFO = [
  [MdAccountBox, "Shepherd Book Construction", true],
  [MdEvent, "06/25/2025"],
  [MdEvent, "06/25/2026"],
  [MdArticle, "BUILDERS MUT INS CO"],
  [MdPerson, "Homer Simpson"],
  [MdAccountBox, "Commercial Package"],
  [MdArticle, "Direct Bill 100%"],
  [MdCallReceived, "Downloads"],
  [MdPlace, "North Carolina"],
];

const TOTALS = [
  ["#2cacbf", "$14,575"],
  ["#f8ac59", "$0"],
  ["#1ab37e", "$14,575"],
  ["#b8bf24", "$0"],
  ["#1c84c6", "$0 ($0)"],
  ["#a033c8", "$0 ($0)"],
  ["#f73b7c", "$0"],
];

const CHOOSE = "[Please Choose]";
const FIELDS = [
  ["Bill Type", "[All]"],
  ["Type", "[All]"],
  ["Status", "[All]"],
  ["Effective Date (from - to)"],
  ["Entered Date (from - to)"],
  ["Policy Create Date (from - to)"],
  ["Create Date (from - to)"],
  ["Premium Type", "[All]"],
  ["Carrier", CHOOSE],
  ["MGA", CHOOSE],
  ["Finance Company", CHOOSE],
  ["Line of Business", CHOOSE],
  ["Follow Up Date (from - to)"],
  ["Follow Up Person", CHOOSE],
  ["Endorsement Specific Type", "[All]"],
  ["Description", "text"],
  ["Policy Agents", CHOOSE],
  ["Policy CSRs", CHOOSE],
  ["Other Options", "[All]"],
  ["Policy Type", "Show All Endorsements"],
  ["Billing Follow Up Date (from - to)"],
  ["Billing Follow Up Person", CHOOSE],
  ["Billing Status", "[All]"],
  ["Has Agency Commission", "[All]"],
];

const COLUMNS = [107, 27, 61, 134, 101, 110, 90, 100, 85, 100, 109, 141, 85, 129];

function Field({ label, value }) {
  const id = useId();

  return (
    <FieldBox>
      <FieldLabel htmlFor={id}>
        {label.startsWith("Endorsement") && <FaQuestionCircle size={12} />}
        {label}
      </FieldLabel>
      {value === "text" ? (
        <TextField id={id} placeholder="Description" />
      ) : value ? (
        <SelectWrap $filled={value.startsWith("Show")}>
          <select id={id}>
            <option>{value}</option>
          </select>
          <Caret />
        </SelectWrap>
      ) : (
        <DateRange>
          <DateBox>
            <input id={id} />
            <button type="button" aria-label="Pick start date">
              <DateIcon />
            </button>
          </DateBox>
          -
          <DateBox>
            <input aria-label={`${label}, end`} />
            <button type="button" aria-label="Pick end date">
              <DateIcon />
            </button>
          </DateBox>
        </DateRange>
      )}
    </FieldBox>
  );
}

function Browser() {
  return (
    <>
      <TabStrip>
        {TABS.map(({ text, active, line, loom }) => (
          <Tab key={text} $active={active} $line={line}>
            {loom ? <LoomIcon /> : <NcIcon />}
            <TabTitle>{text}</TabTitle>
            <button aria-label="Close tab">
              <MdClose size={14} />
            </button>
          </Tab>
        ))}
        <NewTab aria-label="New tab">
          <MdAdd size={17} />
        </NewTab>
        <WindowButtons>
          <button aria-label="Minimize">
            <svg width="10" height="10" stroke="currentColor"><path d="M0 5.5h10" /></svg>
          </button>
          <button aria-label="Restore">
            <svg width="11" height="11" fill="none" stroke="currentColor"><path d="M1 3h7v7H1zM3 3V1h7v7H8" /></svg>
          </button>
          <button aria-label="Close">
            <svg width="11" height="11" stroke="currentColor"><path d="M1 1l9 9M10 1l-9 9" /></svg>
          </button>
        </WindowButtons>
      </TabStrip>
      <Toolbar>
        <NavButtons>
          <MdArrowBack size={18} />
          <MdArrowForward size={18} color="#a381c6" />
          <MdRefresh size={18} />
        </NavButtons>
        <Address>
          <SiteInfo>
            <svg width="14" height="12" viewBox="0 0 14 12" fill="none" stroke="#fff" strokeWidth="1.6">
              <circle cx="3" cy="3" r="2" /><path d="M7 3h6M1 9h6" /><circle cx="11" cy="9" r="2" />
            </svg>
          </SiteInfo>
          <Url>
            <b>www6.nowcerts.com</b>/AMSINS/Policies/Details/758f1365-dcc7-4106-bbcf-e212a88a758b/Endorsements
          </Url>
          <MdStarBorder size={18} />
        </Address>
        <svg width="18" height="16" viewBox="0 0 18 16" fill="none" stroke="currentColor" strokeWidth="2">
          <path d="M7 14H1V2h15v5" /><circle cx="12" cy="10" r="3" /><path d="M14 12l3 3M10 4h6" />
        </svg>
        <Divider />
        <MdQueueMusic size={20} />
        <Profile>
          <svg width="18" height="18" viewBox="0 0 18 18">
            <circle cx="9" cy="9" r="9" fill="#57635f" />
            <path d="M4 16c0-17 11-17 10 0z" fill="#17171a" />
            <ellipse cx="9" cy="7" rx="2" ry="3" fill="#e2bda5" />
            <path d="M6 17l3-6 3 6z" fill="#ddd" />
          </svg>
          Verify it's you
        </Profile>
        <MdMoreVert size={18} />
      </Toolbar>
      <Bookmarks>
        <AppsButton aria-label="All apps">
          <svg width="15" height="15" viewBox="0 0 15 15" fill="none" stroke="#fff" strokeWidth="1.5">
            <path d="M1 1h5v5H1zM9 1h5v5H9zM1 9h5v5H1zM9 9h5v5H9z" />
          </svg>
        </AppsButton>
        <Bookmark as="span" $w={16}>
          <Divider />
        </Bookmark>
        {BOOKMARKS.map(([text, w, icon]) => (
          <Bookmark key={text} href="#" $w={w}>
            {icon}
            {text}
          </Bookmark>
        ))}
        <MoreBookmarks>»</MoreBookmarks>
      </Bookmarks>
    </>
  );
}

function Sidebar() {
  return (
    <Side>
      <SideTools>
        <FaBars size={16} />
        <CookieIcon />
        <FaPlus size={15} />
        <FaArrowLeft size={17} />
      </SideTools>
      <SideSearch>
        <input aria-label="Search menu" placeholder="Search" />
        <FaSearch size={15} />
      </SideSearch>
      <SideList>
        {MENU.map(({ icon: Icon, text, more, tags = [], lit, active }) => (
          <SideItem key={text} $lit={lit} $active={active}>
            <a href="#">
              <Icon size={14} />
              <span>{text}</span>
              {tags.map(([tag, tone]) => (
                <Tag key={tone} $tone={tone} $wide={tag === "NEW"}>
                  {tag}
                </Tag>
              ))}
              {more && <FaAngleLeft size={11} />}
            </a>
          </SideItem>
        ))}
      </SideList>
    </Side>
  );
}

function PolicyHeader() {
  return (
    <>
      <PolicyBar>
        <StatusTag>RENEWING</StatusTag>
        <PolicyNumber>CPP0105619</PolicyNumber>
        <BarButton aria-label="Play" $pad={0}>
          <MdPlayCircleFilled size={17} />
        </BarButton>
        <BarButton aria-label="Resize" $pad={0}>
          <MdHeight size={17} />
        </BarButton>
        <BarButton aria-label="Contact" $bg="#a7b1c2" $pad={0}>
          <MdPerson size={17} />
        </BarButton>
        <BarButton $bg="#82a40f" $pad={8}>
          <MdFilterNone size={11} />
          RATE!
          <MdExpandMore size={16} />
        </BarButton>
        <BarButton $bg="#2cacbf" $pad={5}>
          <MdAdd size={12} />
          ADD / CHANGE
          <MdExpandMore size={16} />
        </BarButton>
        <BarButton $bg="#3a4750" $pad={5}>
          ACTIONS
          <MdExpandMore size={14} />
        </BarButton>
        <BarButton $bg="#1ab394" $pad={7}>
          <MdEdit size={11} />
          EDIT
        </BarButton>
      </PolicyBar>
      <InfoBar>
        {INFO.map(([Icon, text, link]) => (
          <Info key={text} $link={link}>
            <Icon size={12} />
            {link ? <a href="#">{text}</a> : text}
          </Info>
        ))}
      </InfoBar>
      <Totals>
        {TOTALS.map(([color, text]) => (
          <Total key={color} $color={color}>
            {text}
          </Total>
        ))}
      </Totals>
      <Sections>
        <Section href="#" $w={109}>GENERAL <FaAngleDown size={9} /></Section>
        <ActiveSection href="#">BILLING <FaAngleDown size={9} /></ActiveSection>
        <Section href="#" $w={123}>DOCUMENTS <FaAngleDown size={9} /></Section>
        <Section href="#" $w={117}>OPPORTUNITIES</Section>
        <Section href="#" $w={190}>
          ADDITIONAL INTERESTS <Tag $tone="teal">1</Tag>
        </Section>
        <Section href="#" $w={138}>INSURED ITEMS <FaAngleDown size={9} /></Section>
        <Section href="#" $w={190}>PENDING CANCELLATIONS</Section>
        <Section href="#" $w={150}>ACTIVITY HISTORY <FaAngleDown size={9} /></Section>
      </Sections>
    </>
  );
}

function Endorsements() {
  return (
    <Panel>
      <PanelHead $tall>
        <h2>ENDORSEMENTS LIST</h2>
        <OutlineButton $small $green>
          + Add New <FaAngleDown size={9} />
        </OutlineButton>
        <Spacer />
        <OutlineButton>QuickBooks Mode</OutlineButton>
        <OutlineButton>NC General Ledger Mode</OutlineButton>
        <Tools>
          <MdAttachMoney size={17} />
          <MdCheck size={16} />
          <MdRefresh size={17} />
          <MdIosShare size={17} />
          <BoardIcon />
          <MdExpandLess size={17} />
        </Tools>
      </PanelHead>
      <TableArea>
        <TableClip>
          <Table>
            <colgroup>
              {COLUMNS.map((w, i) => (
                <col key={i} width={w} />
              ))}
              <col />
            </colgroup>
            <thead>
              <tr>
                <th />
                <th />
                <th><SortHead>Ord... <em>↓1</em></SortHead></th>
                <th>Type</th>
                <th>Status</th>
                <th>Effective Date</th>
                <th>Entered Date</th>
                <th>Amount</th>
                <th>Description</th>
                <th><SortHead $wrap>Premium Type <em>↑2</em></SortHead></th>
                <th>Agency Comm</th>
                <th>Agency Comm Rcvd</th>
                <th>Balance</th>
                <th>Follow Up Date</th>
                <th>Fully Earned</th>
              </tr>
            </thead>
            <tbody>
              <tr>
                <td>
                  <RowButton $small>
                    Actions <FaAngleDown size={9} />
                  </RowButton>
                </td>
                <td><Chip>P</Chip></td>
                <td>0</td>
                <td>Renew</td>
                <td>Entered in System</td>
                <td>06/25/2025</td>
                <td>06/24/2025</td>
                <td>$14,575.00</td>
                <td><Chip $indent>Renew</Chip></td>
                <td>Premium</td>
                <td>$2,186.25</td>
                <td>$0.00</td>
                <td>$2,186.25</td>
                <td />
                <td />
              </tr>
            </tbody>
          </Table>
        </TableClip>
        <ScrollTrack>
          <i />
          <span />
        </ScrollTrack>
      </TableArea>
    </Panel>
  );
}

function TaskbarRow() {
  return (
    <Taskbar>
      <Apps>
        <AppSlot aria-label="Start"><WindowsIcon /></AppSlot>
        <TaskSearch>
          <svg width="17" height="17" viewBox="0 0 17 17" fill="none" stroke="#ddd" strokeWidth="1.8">
            <circle cx="7" cy="7" r="5.5" /><path d="M11 11l5 5" />
          </svg>
          <input placeholder="Search" aria-label="Search" />
          <DuckIcon />
        </TaskSearch>
        <AppSlot aria-label="Edge"><EdgeIcon /></AppSlot>
        <AppSlot aria-label="Explorer"><ExplorerIcon /></AppSlot>
        <AppSlot aria-label="Quo">
          <svg width="24" height="24" viewBox="0 0 24 24" fill="none" stroke="#fff" strokeWidth="2.4">
            <rect width="24" height="24" rx="5" fill="#4527f0" stroke="none" />
            <circle cx="12" cy="11.5" r="5.5" /><path d="M12 17h6M13 12l3 4" />
          </svg>
        </AppSlot>
        <AppSlot aria-label="Excel"><OfficeIcon letter="X" dark="#185c37" light="#33c481" tile="#107c41" /></AppSlot>
        <AppSlot aria-label="Outlook"><OfficeIcon letter="O" dark="#0a5fb0" light="#32a9e8" tile="#0f6cbd" /></AppSlot>
        <AppSlot aria-label="Word"><OfficeIcon letter="W" dark="#103f91" light="#41a5ee" tile="#185abd" /></AppSlot>
        <AppSlot aria-label="Snip" $run><SnipIcon /></AppSlot>
        <AppSlot aria-label="Chrome"><ChromeIcon /></AppSlot>
        <AppSlot aria-label="Chrome, second profile" $run><ChromeProfileIcon /></AppSlot>
        <AppSlot aria-label="Zoom" $bg="#7d3b40" $run>
          <svg width="24" height="24" viewBox="0 0 24 24">
            <circle cx="12" cy="12" r="12" fill="#0b5cff" />
            <text x="10" y="16" fill="#fff" fontSize="12" fontWeight="700" textAnchor="middle" fontFamily="Inter, sans-serif">zm</text>
          </svg>
          <Count $big>15</Count>
        </AppSlot>
        <AppSlot aria-label="Slack" $run>
          <SlackIcon />
          <Count>1</Count>
        </AppSlot>
        <AppSlot aria-label="Publisher"><OfficeIcon letter="P" dark="#036c70" light="#37c6d0" tile="#038387" /></AppSlot>
        <AppSlot aria-label="Scanner"><PrinterIcon /></AppSlot>
        <AppSlot aria-label="McAfee">
          <svg width="22" height="24" viewBox="0 0 22 24" fill="#c01818">
            <path d="M0 0l11 6L22 0v18l-11 6-11-6zM5 7v8l6 3 6-3V7l-6 4z" fillRule="evenodd" />
          </svg>
        </AppSlot>
        <AppSlot aria-label="Amazon Music"><TileText bg="#4413e6" size="6" lines={[["amazon", 10], ["music", 18]]} /></AppSlot>
        <AppSlot aria-label="iHeart"><HeartIcon /></AppSlot>
        <AppSlot aria-label="Sticky Notes">
          <svg width="23" height="22" viewBox="0 0 23 22">
            <path d="M0 0h23v11L12 22H0z" fill="#ffd90a" /><path d="M12 22V11h11z" fill="#5b5338" />
          </svg>
        </AppSlot>
        <AppSlot aria-label="Chrome, current" $bg="#303030" $run="wide"><ChromeProfileIcon /></AppSlot>
        <AppSlot aria-label="Calculator" $run><CalculatorIcon /></AppSlot>
      </Apps>
      <Tray>
        <MdExpandLess size={18} />
        <svg width="18" height="18" viewBox="0 0 18 18" fill="none" stroke="currentColor">
          <rect x="6" y="1" width="6" height="10" rx="3" /><path d="M4 8c0 7 10 7 10 0M9 13v4" />
        </svg>
        <svg width="18" height="18" viewBox="0 0 18 18" fill="none" stroke="currentColor">
          <path d="M11 3H2v10h14v-2M6 16h7M9 13v3M13 1h4v5h-4zM15 6v7" />
        </svg>
        <svg width="18" height="18" viewBox="0 0 18 18" fill="none" stroke="currentColor">
          <path d="M2 7h3l4-4v12l-4-4H2zM11 7q2 2 0 4M13 5q4 4 0 8" />
        </svg>
        <svg width="18" height="18" viewBox="0 0 18 18" fill="none" stroke="currentColor">
          <path d="M8 5h7v8H4M16 7v4" /><path d="M2 9c0-7 7-7 6-1 0 4-4 5-6 4z" fill="#fff" />
        </svg>
        <time>
          5:24 PM
          <br />
          6/24/2025
        </time>
      </Tray>
    </Taskbar>
  );
}

export default function App() {
  return (
    <ThemeProvider theme={theme}>
      <GlobalStyle />
      <Screen>
        <Browser />
        <AppHeader>
          <Logo href="#">
            <svg width="36" height="30" viewBox="0 0 36 30" fill="#fff">
              <path d="M0 25q0-2 1-3L11 13v10q0 2-1 3l-6 3q-4 1-4-4z" />
              <path d="M12 12q0-2 1-3l6-7q4-4 4 1v21q0 2-1 3l-6 3q-4 1-4-4z" />
              <path d="M24 12q0-2 1-3l6-7q5-4 5 1v21q0 2-1 3l-6 3q-5 1-5-4z" />
            </svg>
            <LogoText>
              momentum
              <small>by NowCerts</small>
            </LogoText>
          </Logo>
          <Banner>
            <p>
              Join the Ascend Webinar: Make AI Work For You - Transforming Your Financial Oper...{" "}
              <a href="#"><b>View Details</b></a>
            </p>
            <button aria-label="Dismiss"><MdClose size={11} /></button>
          </Banner>
          <HeaderTools>
            <FaBell size={16} />
            <FaMagic size={15} color="#f47b20" />
            <FaRegClock size={15} color="#3f7ea0" />
            <FaStar size={17} color="#2cacbf" />
            <HeaderLink href="#" $color="#2cacbf">
              <svg width="16" height="16" viewBox="0 0 16 16">
                <circle cx="8" cy="8" r="8" fill="#2ba7c4" />
                <path d="M2 13C0 5 6 2 10 6s2 9-2 10z" fill="#8e57c5" />
                <circle cx="8" cy="5" r="3" fill="#174e78" />
              </svg>
              Get Help
            </HeaderLink>
            <HeaderLink href="#" $gap={8}>
              <FaUser size={11} />
              <HeaderLink as="span" $gap={2}>
                Tammy Test <FaCaretDown size={12} />
              </HeaderLink>
            </HeaderLink>
          </HeaderTools>
        </AppHeader>
        <Body>
          <Sidebar />
          <Main>
            <PolicyHeader />
            <Panel>
              <PanelHead>
                <h2>SEARCH</h2>
                <Spacer />
                <Tools>
                  <MdBlock size={16} />
                  <MdMoreHoriz size={15} />
                  <BoardIcon />
                  <MdExpandLess size={17} />
                </Tools>
              </PanelHead>
              <SearchForm>
                <Fields>
                  {FIELDS.map(([label, value]) => (
                    <Field key={label} label={label} value={value} />
                  ))}
                </Fields>
                <SubmitButton type="button">Search</SubmitButton>
              </SearchForm>
            </Panel>
            <Endorsements />
          </Main>
          <PageScroll />
        </Body>
        <TaskbarRow />
      </Screen>
      <HelpTab>
        <MdHelpOutline size={20} />
        ADDITIONAL HELP
      </HelpTab>
      <Onboarding>
        Onboarding Checklist
        <span>13</span>
      </Onboarding>
      <Chat aria-label="Open chat">
        <svg width="24" height="18" viewBox="0 0 24 18">
          <rect width="24" height="18" rx="4" fill="#fff" />
          <path d="M4 6h16M4 11h10" stroke="#37146f" strokeWidth="2" />
        </svg>
      </Chat>
      <LinkHint>
        https://www6.nowcerts.com/AMSINS/Policies/Details/758f1365-dcc7-4106-bbcf-e212a88a758b/Opportunities
      </LinkHint>
      <Pointer width="14" height="20" viewBox="0 0 14 20">
        <path d="M1 1v15l4-3 2 6 3-1-3-6h5z" fill="#fff" stroke="#222" />
      </Pointer>
    </ThemeProvider>
  );
}
